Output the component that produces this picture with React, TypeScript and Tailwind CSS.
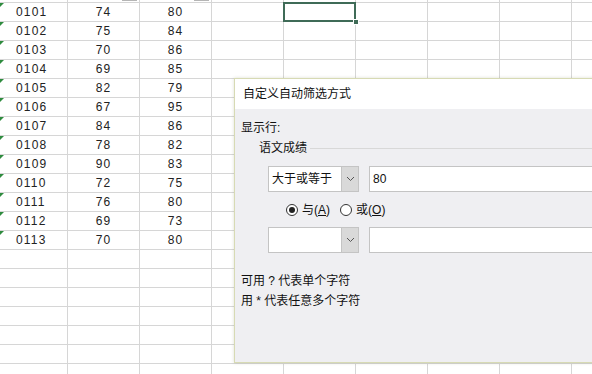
const FONT = { fontFamily: '"Liberation Sans", "Noto Sans CJK SC", sans-serif' };

const rows: [string, string, string][] = [
  ["0101", "74", "80"],
  ["0102", "75", "84"],
  ["0103", "70", "86"],
  ["0104", "69", "85"],
  ["0105", "82", "79"],
  ["0106", "67", "95"],
  ["0107", "84", "86"],
  ["0108", "78", "82"],
  ["0109", "90", "83"],
  ["0110", "72", "75"],
  ["0111", "76", "80"],
  ["0112", "69", "73"],
  ["0113", "70", "80"],
];

const extraCols = [0, 1, 2, 3, 4, 5];

function Cell({ first, children, className = "" }: { first?: boolean; children?: React.ReactNode; className?: string }) {
  return (
    <div
      className={`relative h-[19px] shrink-0 border-b border-r border-[#d6d6d6] ${
        first ? "w-[68px]" : "w-[72px]"
      } ${className}`}
    >
      {children}
    </div>
  );
}

function ErrorMark() {
  return (
    <span className="absolute left-0 top-0 h-0 w-0 border-r-[4px] border-t-[4px] border-r-transparent border-t-[#2e8b3e]" />
  );
}

function FilterButton() {
  return (
    <span className="absolute bottom-[1px] right-[2px] h-[15px] w-[15px] border border-[#b5b5b5] bg-[#f3f3f3]" />
  );
}

function Chevron() {
  return (
    <svg width="9" height="6" viewBox="0 0 9 6" fill="none">
      <path d="M1 1l3.5 3.5L8 1" stroke="#555" strokeWidth="1" />
    </svg>
  );
}

function Combo({ value }: { value?: string }) {
  return (
    <div className="flex items-center gap-[10px]">
      <div className="flex h-[26px] w-[91px] border border-[#c4c4c4] bg-white">
        <div className="flex flex-1 items-center pl-[3px] text-[12px] text-[#111]">{value}</div>
        <div className="flex w-[17px] items-center justify-center border-l border-[#c4c4c4] bg-[#d9d9d9]">
          <Chevron />
        </div>
      </div>
      <div className="h-[26px] w-[240px] border border-[#c4c4c4] bg-white pl-[3px] text-[12px] leading-[24px] text-[#111]">
        {value ? "80" : ""}
      </div>
    </div>
  );
}

function Radio({ checked, label, hot }: { checked?: boolean; label: string; hot: string }) {
  return (
    <div className="flex items-center gap-[4px] text-[12px] text-[#111]">
      <span className="flex h-[12px] w-[12px] items-center justify-center rounded-full border border-[#333] bg-white">
        {checked && <span className="h-[6px] w-[6px] rounded-full bg-[#222]" />}
      </span>
      <span>
        {label}(<span className="underline">{hot}</span>)
      </span>
    </div>
  );
}

export default function App() {
  return (
    <div className="relative h-[374px] w-[592px] overflow-hidden bg-white" style={FONT}>
      {/* sheet */}
      <div className="-mt-[16px] flex flex-col text-[12px] tracking-[1.2px] text-[#222]">
        <div className="flex">
          <Cell first>
            <span className="absolute bottom-[2px] left-[16px]">学号</span>
          </Cell>
          <Cell>
            <span className="absolute bottom-[1px] left-[10px]">语文成绩</span>
            <FilterButton />
          </Cell>
          <Cell>
            <span className="absolute bottom-[1px] left-[10px]">数学成绩</span>
            <FilterButton />
          </Cell>
          {extraCols.map((c) => (
            <Cell key={c} />
          ))}
        </div>
        {rows.map(([id, a, b], i) => (
          <div key={id} className="flex leading-[18px]">
            <Cell first>
              <ErrorMark />
              <span className="pl-[16px]">{id}</span>
            </Cell>
            <Cell className="text-center">{a}</Cell>
            <Cell className="text-center">{b}</Cell>
            {extraCols.map((c) => (
              <Cell key={c} className={i === 0 && c === 1 ? "z-10" : ""}>
                {i === 0 && c === 1 && (
                  <>
                    <span className="absolute -left-[1px] -top-[1px] bottom-[-1px] right-[-1px] border-2 border-[#3f6b57]" />
                    <span className="absolute -bottom-[4px] -right-[4px] h-[6px] w-[6px] border border-white bg-[#3f6b57]" />
                  </>
                )}
              </Cell>
            ))}
          </div>
        ))}
        {[0, 1, 2, 3, 4, 5, 6].map((r) => (
          <div key={r} className="flex">
            <Cell first />
            <Cell />
            <Cell />
            {extraCols.map((c) => (
              <Cell key={c} />
            ))}
          </div>
        ))}
      </div>

      {/* dialog */}
      <div className="absolute left-[234px] top-[78px] z-20 flex h-[285px] w-[400px] flex-col border border-[#d7dab4] bg-[#efeff2] shadow-[0_0_3px_rgba(120,130,80,0.25)]">
        <div className="h-[30px] bg-white pl-[8px] text-[12px] leading-[30px] text-[#111]">自定义自动筛选方式</div>
        <div className="flex flex-col pl-[6px] text-[12px] text-[#111]">
          <div className="mt-[11px] leading-[16px]">显示行:</div>
          <div className="mt-[4px] flex items-center pl-[18px]">
            <span className="leading-[16px]">语文成绩</span>
            <span className="ml-[3px] h-px flex-1 bg-[#d8d8d8]" />
          </div>
          <div className="mt-[10px] pl-[27px]">
            <Combo value="大于或等于" />
          </div>
          <div className="mt-[9px] flex gap-[10px] pl-[45px]">
            <Radio checked label="与" hot="A" />
            <Radio label="或" hot="O" />
          </div>
          <div className="mt-[8px] pl-[27px]">
            <Combo />
          </div>
          <div className="mt-[19px] leading-[18px]">可用 ? 代表单个字符</div>
          <div className="mt-[2px] leading-[18px]">用 * 代表任意多个字符</div>
        </div>
      </div>
    </div>
  );
}
